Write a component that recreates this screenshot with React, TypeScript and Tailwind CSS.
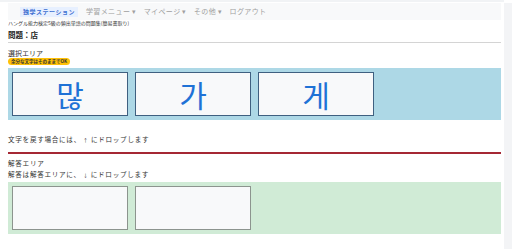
import React from 'react'

const font = { fontFamily: '"Noto Sans CJK JP", "Noto Sans", sans-serif' }

function Tile({ ch, kind }: { ch?: string; kind: 'choice' | 'answer' }) {
  const border = kind === 'choice' ? 'border-[#3f6080]' : 'border-[#8c948e]'
  return (
    <div
      className={`w-[116px] h-[44px] border ${border} bg-[#f8f9fa] flex items-center justify-center text-[30px] leading-none text-[#1f72d6]`}
      style={{ fontFamily: '"Noto Sans CJK KR", sans-serif' }}
    >
      {ch}
    </div>
  )
}

function Arrow({ ch }: { ch: string }) {
  return <span className="inline-block w-[10px] text-center text-[5px]">{ch}</span>
}

export default function App() {
  const menu = ['学習メニュー ▾', 'マイページ ▾', 'その他 ▾', 'ログアウト']

  return (
    <div className="w-[512px] h-[249px] bg-white flex overflow-hidden leading-none" style={font}>
      <div className="flex-1 border-t-2 border-[#f1f3f5] pl-[8px] pr-[3px] pt-[1px]">
        <nav className="h-[17px] bg-[#f8f9fa] flex items-center pl-[12px]">
          <span className="px-[3px] py-[1px] bg-[#e7f0ff] text-[#3d6fd1] text-[6px] leading-[8px] font-bold tracking-[0.5px]">
            独学ステーション
          </span>
          <div className="flex ml-[8px] gap-[7px] text-[7px] leading-[9px] text-[#a0a0a0] tracking-[0.4px]">
            {menu.map((m) => (
              <span key={m}>{m}</span>
            ))}
          </div>
        </nav>

        <p className="text-[5px] leading-[6px] mt-[0px] text-[#333]">
          ハングル能力検定5級の頻出単語の問題集(簡易書取り)
        </p>
        <h1 className="text-[7.5px] leading-[10px] font-bold mt-[4px] text-[#222]">問題：店</h1>
        <div className="h-[1px] bg-[#d4d4d4] mt-[2px]" />

        <p className="text-[7px] leading-[9px] mt-[6px] text-[#333]">選択エリア</p>
        <div className="w-fit bg-[#ffc107] rounded-full px-[3px] text-[4.5px] leading-[7px] font-bold text-[#333]">
          余分な文字はそのままでOK
        </div>
        <div className="bg-[#add8e6] h-[52px] mt-[3px] flex gap-[7px] p-[4px]">
          <Tile ch="많" kind="choice" />
          <Tile ch="가" kind="choice" />
          <Tile ch="게" kind="choice" />
        </div>

        <p className="text-[6.6px] leading-[8px] mt-[15px] text-[#333] tracking-[0.7px]">
          文字を戻す場合には、<Arrow ch="↑" />にドロップします
        </p>
        <div className="h-[2px] bg-[#a52834] mt-[8px]" />

        <p className="text-[6.6px] leading-[8px] mt-[5px] text-[#333] tracking-[0.7px]">解答エリア</p>
        <p className="text-[6.6px] leading-[8px] mt-[3px] text-[#333] tracking-[0.7px]">
          解答は解答エリアに、<Arrow ch="↓" />にドロップします
        </p>
        <div className="bg-[#d0ebd6] h-[52px] mt-[3px] flex gap-[7px] p-[4px]">
          <Tile kind="answer" />
          <Tile kind="answer" />
        </div>
      </div>
      <div className="w-[8px] bg-[#f3f4f6] mt-[3px]" />
    </div>
  )
}
